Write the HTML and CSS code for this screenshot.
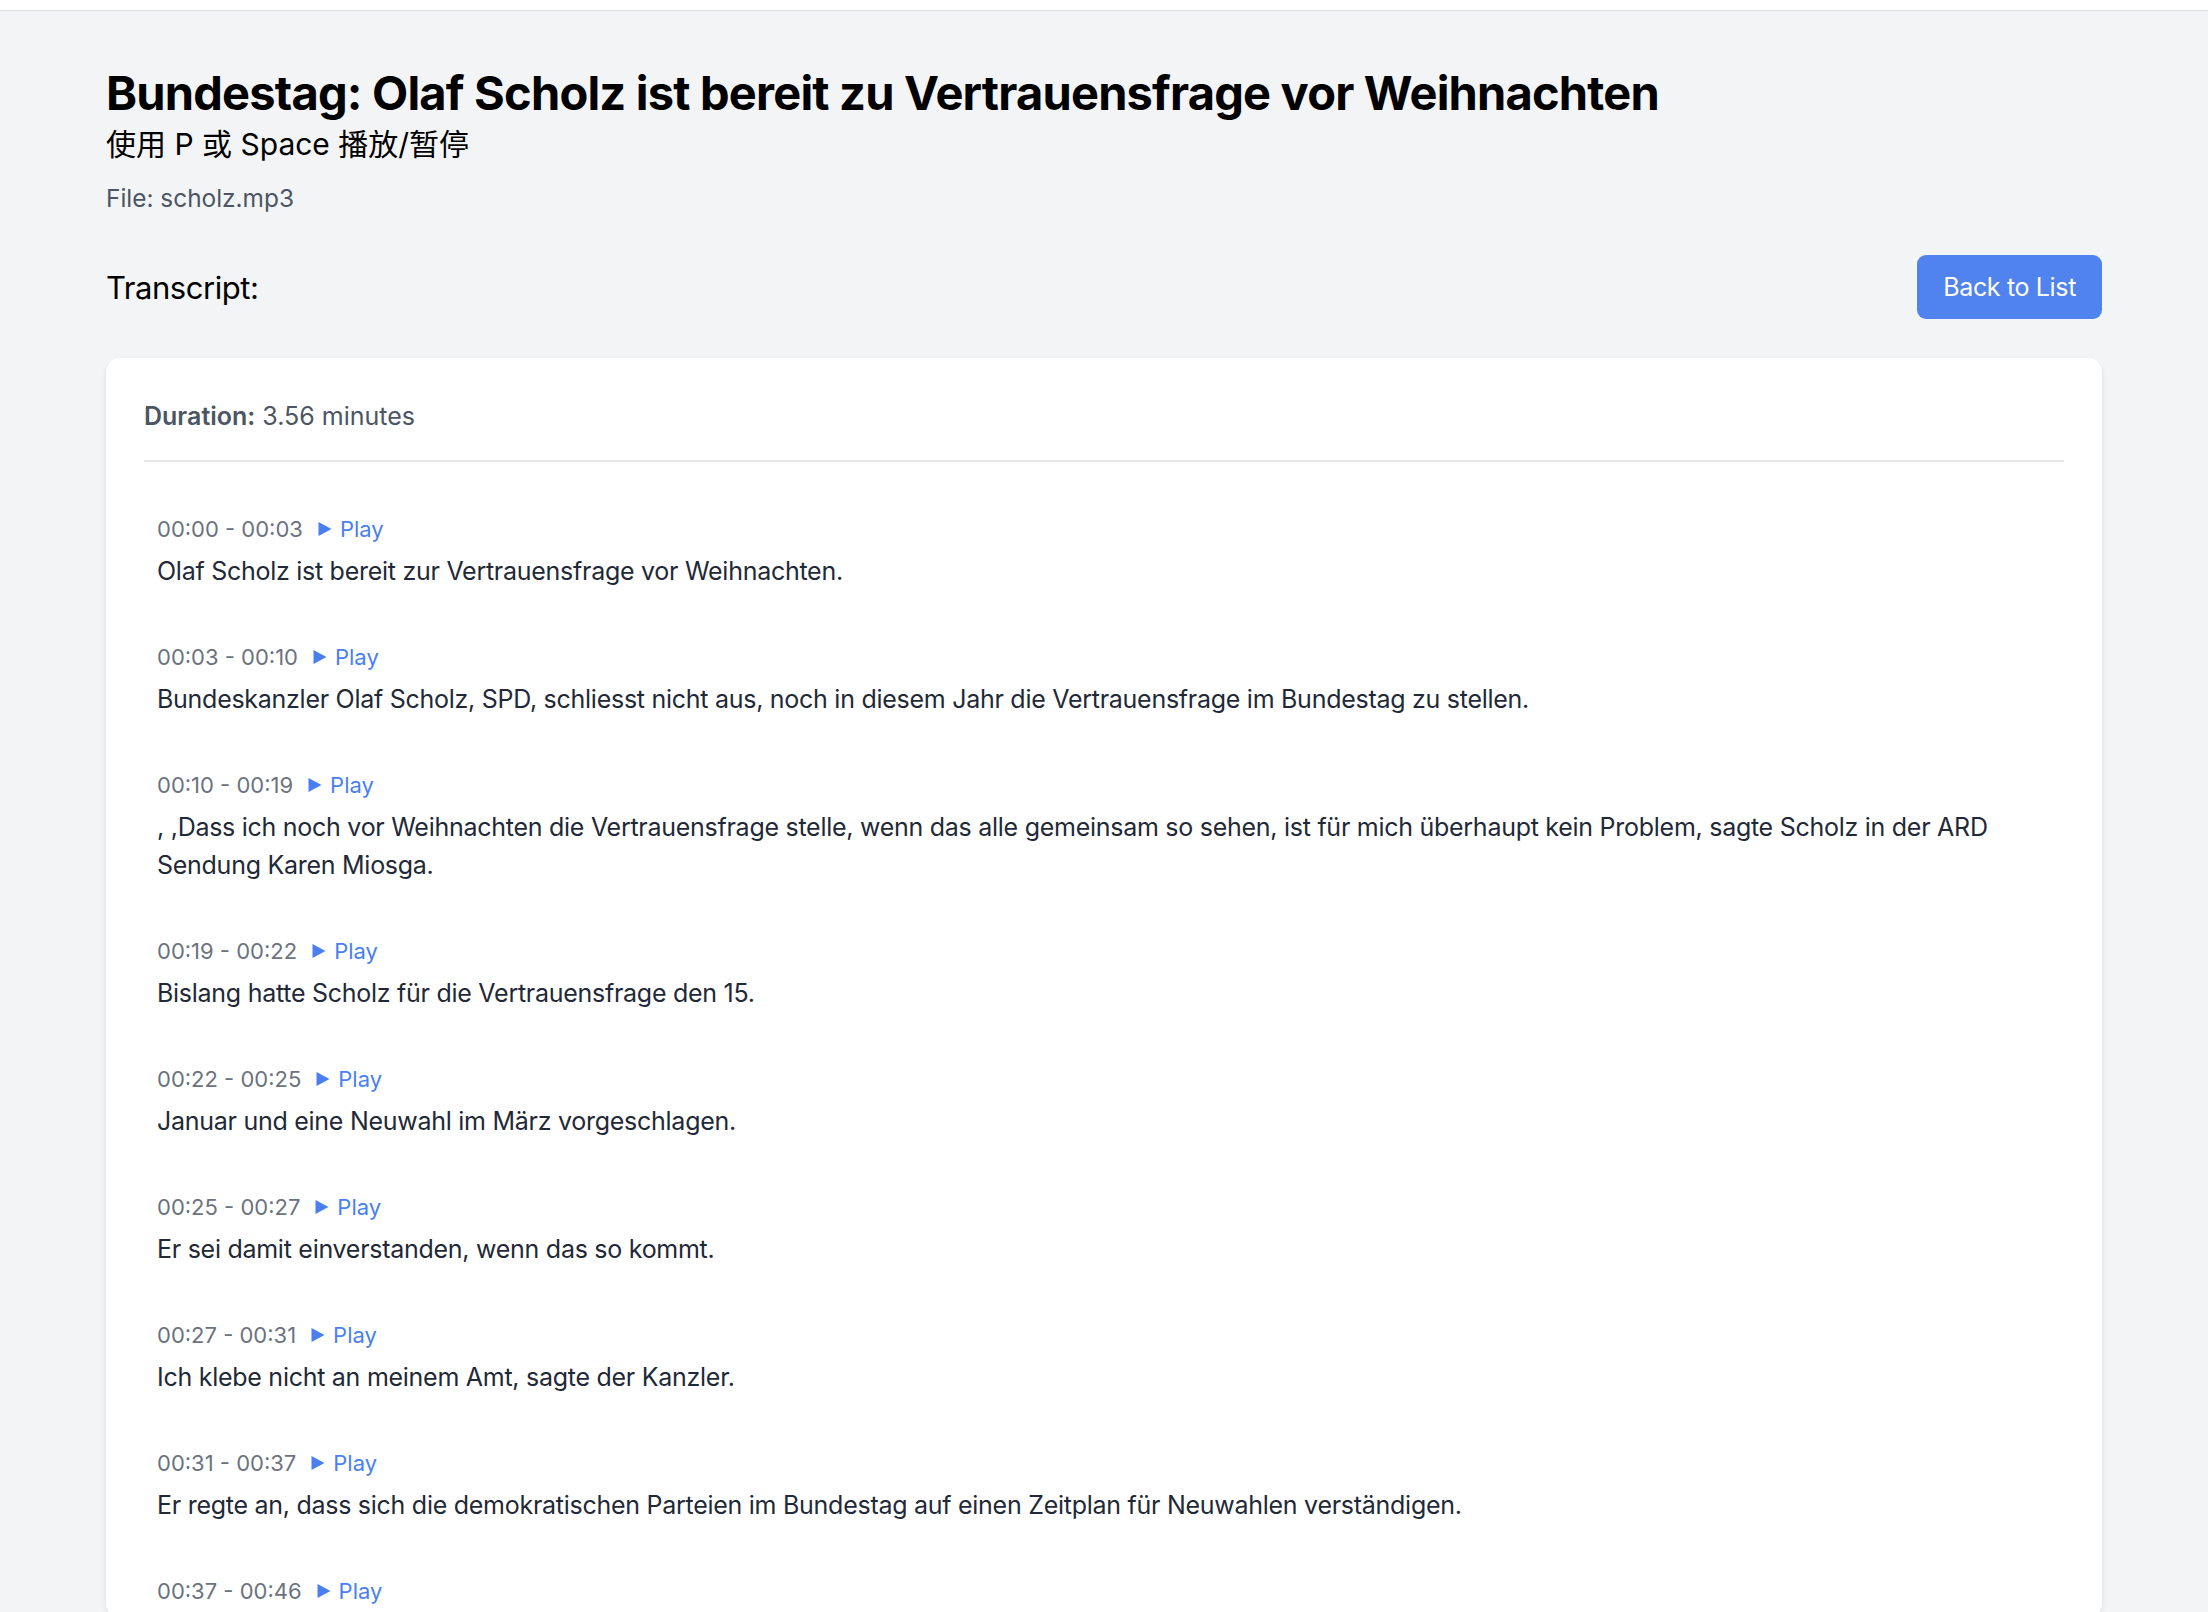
FILE: index.html
```html
<!DOCTYPE html>
<html lang="de">
<head>
<meta charset="utf-8">
<title>Bundestag: Olaf Scholz ist bereit zu Vertrauensfrage vor Weihnachten</title>
<link rel="stylesheet" href="styles.css">
</head>
<body>
<div class="topbar"></div>
<main class="page">
  <h1 class="title">Bundestag: Olaf Scholz ist bereit zu Vertrauensfrage vor Weihnachten</h1>
  <p class="hint">使用 P 或 Space 播放/暂停</p>
  <p class="file">File: scholz.mp3</p>

  <div class="toolbar">
    <h2 class="label">Transcript:</h2>
    <a class="back-btn" href="#">Back to List</a>
  </div>

  <section class="card">
    <p class="duration"><strong>Duration:</strong> 3.56 minutes</p>
    <hr class="divider">
    <div class="segments">
      <div class="segment">
        <div class="seg-head"><span class="time">00:00 - 00:03</span><a class="play" href="#"><svg class="tri" viewBox="0 0 13 14"><path d="M0 0 L13 7 L0 14 Z"/></svg>Play</a></div>
        <p class="seg-text">Olaf Scholz ist bereit zur Vertrauensfrage vor Weihnachten.</p>
      </div>
      <div class="segment">
        <div class="seg-head"><span class="time">00:03 - 00:10</span><a class="play" href="#"><svg class="tri" viewBox="0 0 13 14"><path d="M0 0 L13 7 L0 14 Z"/></svg>Play</a></div>
        <p class="seg-text">Bundeskanzler Olaf Scholz, SPD, schliesst nicht aus, noch in diesem Jahr die Vertrauensfrage im Bundestag zu stellen.</p>
      </div>
      <div class="segment">
        <div class="seg-head"><span class="time">00:10 - 00:19</span><a class="play" href="#"><svg class="tri" viewBox="0 0 13 14"><path d="M0 0 L13 7 L0 14 Z"/></svg>Play</a></div>
        <p class="seg-text">, ,Dass ich noch vor Weihnachten die Vertrauensfrage stelle, wenn das alle gemeinsam so sehen, ist für mich überhaupt kein Problem, sagte Scholz in der ARD Sendung Karen Miosga.</p>
      </div>
      <div class="segment">
        <div class="seg-head"><span class="time">00:19 - 00:22</span><a class="play" href="#"><svg class="tri" viewBox="0 0 13 14"><path d="M0 0 L13 7 L0 14 Z"/></svg>Play</a></div>
        <p class="seg-text">Bislang hatte Scholz für die Vertrauensfrage den 15.</p>
      </div>
      <div class="segment">
        <div class="seg-head"><span class="time">00:22 - 00:25</span><a class="play" href="#"><svg class="tri" viewBox="0 0 13 14"><path d="M0 0 L13 7 L0 14 Z"/></svg>Play</a></div>
        <p class="seg-text">Januar und eine Neuwahl im März vorgeschlagen.</p>
      </div>
      <div class="segment">
        <div class="seg-head"><span class="time">00:25 - 00:27</span><a class="play" href="#"><svg class="tri" viewBox="0 0 13 14"><path d="M0 0 L13 7 L0 14 Z"/></svg>Play</a></div>
        <p class="seg-text">Er sei damit einverstanden, wenn das so kommt.</p>
      </div>
      <div class="segment">
        <div class="seg-head"><span class="time">00:27 - 00:31</span><a class="play" href="#"><svg class="tri" viewBox="0 0 13 14"><path d="M0 0 L13 7 L0 14 Z"/></svg>Play</a></div>
        <p class="seg-text">Ich klebe nicht an meinem Amt, sagte der Kanzler.</p>
      </div>
      <div class="segment">
        <div class="seg-head"><span class="time">00:31 - 00:37</span><a class="play" href="#"><svg class="tri" viewBox="0 0 13 14"><path d="M0 0 L13 7 L0 14 Z"/></svg>Play</a></div>
        <p class="seg-text">Er regte an, dass sich die demokratischen Parteien im Bundestag auf einen Zeitplan für Neuwahlen verständigen.</p>
      </div>
      <div class="segment">
        <div class="seg-head"><span class="time">00:37 - 00:46</span><a class="play" href="#"><svg class="tri" viewBox="0 0 13 14"><path d="M0 0 L13 7 L0 14 Z"/></svg>Play</a></div>
      </div>
    </div>
  </section>
</main>
</body>
</html>
```

FILE: styles.css
```css
* { box-sizing: border-box; }

html, body {
  margin: 0;
  padding: 0;
  background: #f3f4f6;
  font-family: Inter, "Noto Sans", "Noto Sans CJK SC", sans-serif;
}

.topbar {
  height: 11px;
  background: #ffffff;
  border-bottom: 1px solid #dedfdd;
}

.page {
  padding: 54px 106px 0;
}

.title {
  margin: 0;
  font-size: 47px;
  line-height: 56px;
  font-weight: 700;
  color: #000000;
  letter-spacing: -0.8px;
}

.hint {
  margin: 5px 0 0;
  font-family: Inter, "Noto Sans CJK SC", sans-serif;
  font-size: 30px;
  line-height: 36px;
  color: #000000;
}

.file {
  margin: 20px 0 0;
  font-size: 24.4px;
  line-height: 32px;
  color: #4b5563;
}

.toolbar {
  margin-top: 41px;
  display: flex;
  align-items: center;
  justify-content: space-between;
}

.label {
  margin: 0;
  font-size: 31px;
  line-height: 40px;
  font-weight: 400;
  color: #000000;
  letter-spacing: -0.45px;
  padding-top: 2px;
}

.back-btn {
  display: flex;
  align-items: center;
  height: 64px;
  padding: 0 26px;
  background: #5083ee;
  color: #ffffff;
  font-size: 25px;
  letter-spacing: -0.35px;
  text-decoration: none;
  border-radius: 9px;
}

.card {
  margin-top: 39px;
  background: #ffffff;
  border-radius: 14px;
  box-shadow: 0 4px 8px rgba(0, 0, 0, 0.06), 0 1px 3px rgba(0, 0, 0, 0.06);
  padding: 42px 38px 0;
  height: 1260px;
}

.duration {
  margin: 0;
  font-size: 25px;
  line-height: 32px;
  color: #4b5563;
}

.duration strong { font-weight: 600; }

.divider {
  margin: 28px 0 0;
  border: 0;
  border-top: 2px solid #e5e7eb;
}

.segments {
  padding: 53px 13px 0;
  display: flex;
  flex-direction: column;
  gap: 53px;
}

.seg-head {
  display: flex;
  align-items: center;
  height: 28px;
}

.time {
  font-size: 22px;
  line-height: 28px;
  color: #6b7280;
}

.play {
  display: flex;
  align-items: center;
  margin-left: 15px;
  font-size: 22px;
  line-height: 28px;
  color: #4a7ff0;
  text-decoration: none;
}

.tri {
  width: 14px;
  height: 14px;
  margin-right: 8px;
  fill: #4a7ff0;
}

.seg-text {
  margin: 9px 0 0;
  font-size: 25px;
  line-height: 38px;
  letter-spacing: -0.27px;
  color: #1f2937;
}
```
